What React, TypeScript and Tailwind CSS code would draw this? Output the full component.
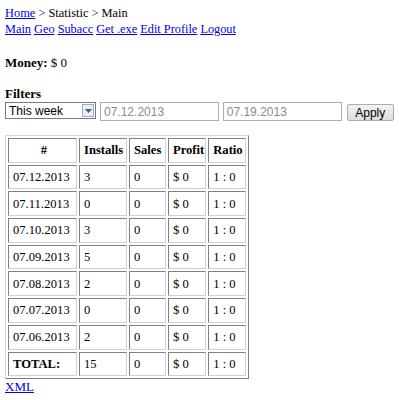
const rows = [
  ["07.12.2013", "3"],
  ["07.11.2013", "0"],
  ["07.10.2013", "3"],
  ["07.09.2013", "5"],
  ["07.08.2013", "2"],
  ["07.07.2013", "0"],
  ["07.06.2013", "2"],
];

const cell =
  "border border-t-[#808080] border-l-[#808080] border-b-[#d0d0d0] border-r-[#d0d0d0] pl-[4px] pr-[1px] h-[24.7px] align-middle";

export default function App() {
  return (
    <div className="min-h-[400px] bg-white px-[5px] pt-[5px] font-['Liberation_Serif',serif] text-[13px] leading-[16px] text-black">
      <div className="text-[12.4px]">
        <a href="#" className="text-[#0000ee] underline">Home</a> &gt; Statistic &gt; Main
      </div>
      <div className="text-[12.3px]">
        {["Main", "Geo", "Subacc", "Get .exe", "Edit Profile", "Logout"].map((l, i) => (
          <span key={l}>
            {i > 0 ? " " : null}
            <a href="#" className="text-[#0000ee] underline">
              {l}
            </a>
          </span>
        ))}
      </div>

      <div className="mt-[18px]">
        <b>Money:</b> $ 0
      </div>

      <div className="mt-[15px] font-bold">Filters</div>
      <div className="flex items-start gap-[4px]">
        <div className="flex h-[17px] w-[92px] items-center border border-[#7a7a7a] bg-white font-['Liberation_Sans',sans-serif] text-[12px]">
          <span className="flex-1 pl-[3px]">This week</span>
          <span className="mr-[1px] flex h-[13px] w-[12px] items-center justify-center border border-[#a0a8c8] bg-[#e8ecf8]">
            <svg width="7" height="4" viewBox="0 0 7 4">
              <path d="M0 0h7L3.5 4z" fill="#4d5a78" />
            </svg>
          </span>
        </div>
        <div className="flex h-[19px] w-[120px] items-center border border-[#abadb3] pl-[3px] font-['Liberation_Sans',sans-serif] text-[12px] text-[#8a8a8a]">
          07.12.2013
        </div>
        <div className="flex h-[19px] w-[120px] items-center border border-[#abadb3] pl-[3px] font-['Liberation_Sans',sans-serif] text-[12px] text-[#8a8a8a]">
          07.19.2013
        </div>
        <button className="ml-[1px] mt-[2px] h-[17px] w-[48px] rounded-[2px] border border-[#acacac] bg-gradient-to-b from-[#f2f2f2] to-[#dedede] font-['Liberation_Sans',sans-serif] text-[12px] leading-[14px]">
          Apply
        </button>
      </div>

      <table className="mt-[14px] border-separate border-spacing-[2px] border border-t-[#d8d8d8] border-l-[#d8d8d8] border-b-[#808080] border-r-[#808080] text-[12.6px]">
        <thead>
          <tr className="font-bold">
            <th className={cell + " w-[69px] text-center"}>#</th>
            <th className={cell + " w-[48px] text-left"}>Installs</th>
            <th className={cell + " w-[37px] text-left"}>Sales</th>
            <th className={cell + " w-[38px] text-left"}>Profit</th>
            <th className={cell + " w-[38px] text-left"}>Ratio</th>
          </tr>
        </thead>
        <tbody>
          {rows.map(([d, n]) => (
            <tr key={d}>
              <td className={cell}>{d}</td>
              <td className={cell}>{n}</td>
              <td className={cell}>0</td>
              <td className={cell}>$ 0</td>
              <td className={cell}>1 : 0</td>
            </tr>
          ))}
          <tr>
            <td className={cell + " font-bold"}>TOTAL:</td>
            <td className={cell}>15</td>
            <td className={cell}>0</td>
            <td className={cell}>$ 0</td>
            <td className={cell}>1 : 0</td>
          </tr>
        </tbody>
      </table>
      <a href="#" className="text-[#0000ee] underline">XML</a>
    </div>
  );
}
